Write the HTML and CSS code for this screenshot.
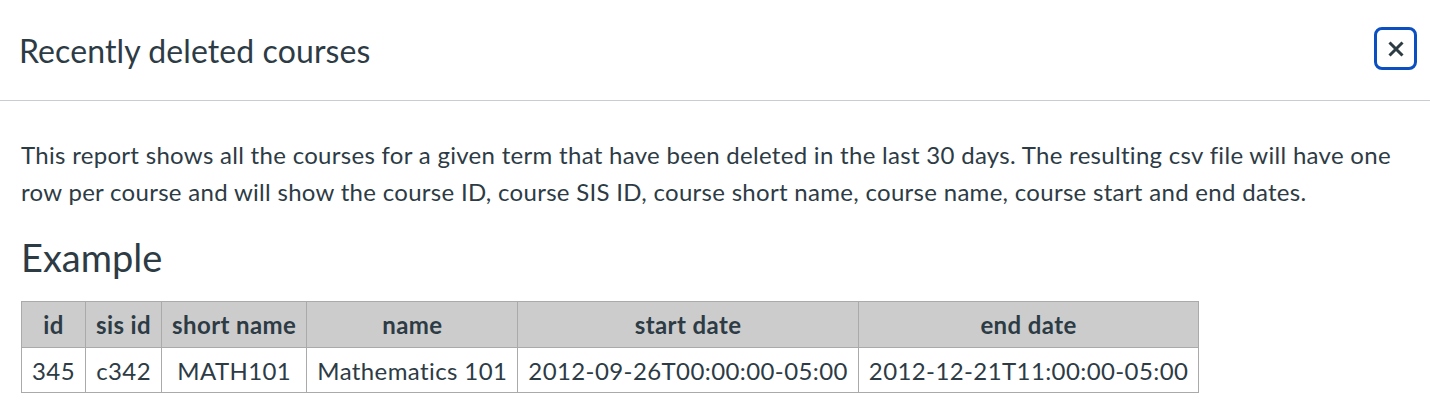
FILE: index.html
```html
<!DOCTYPE html>
<html lang="en">

<head>
    <meta charset="UTF-8">
    <meta name="viewport" content="width=device-width, initial-scale=1.0">
    <title>Recently deleted courses</title>
    <link rel="stylesheet" href="styles.css">
</head>

<body>

    <div class="modal">
        <header class="modal-header">
            <h1>Recently deleted courses</h1>
            <button class="close-btn" type="button" aria-label="Close">
                <svg width="16" height="16" viewBox="0 0 16 16">
                    <path d="M1.5 1.5 L14.5 14.5 M14.5 1.5 L1.5 14.5" stroke="#2d3b45" stroke-width="3" fill="none" />
                </svg>
            </button>
        </header>

        <div class="modal-body">
            <p>This report shows all the courses for a given term that have been deleted in the last 30 days. The resulting csv file will have one row per course and will show the course ID, course SIS ID, course short name, course name, course start and end dates.</p>

            <h2>Example</h2>

            <!-- Sample output of the report -->
            <table>
                <tr>
                    <th>id</th>
                    <th>sis id</th>
                    <th>short name</th>
                    <th>name</th>
                    <th>start date</th>
                    <th>end date</th>
                </tr>
                <tr>
                    <td>345</td>
                    <td>c342</td>
                    <td>MATH101</td>
                    <td>Mathematics 101</td>
                    <td>2012-09-26T00:00:00-05:00</td>
                    <td>2012-12-21T11:00:00-05:00</td>
                </tr>
            </table>
        </div>
    </div>

</body>

</html>
```

FILE: styles.css
```css
body {
    font-family: Lato, "Open Sans", sans-serif;
    margin: 0;
    padding: 0;
    background-color: #ffffff;
    color: #2d3b45;
}

.modal-header {
    display: flex;
    align-items: center;
    justify-content: space-between;
    height: 100px;
    padding: 0 13px 0 19px;
    border-bottom: 1px solid #c7cdd1;
}

h1 {
    font-size: 32px;
    font-weight: 400;
    letter-spacing: 0.1px;
    margin: 0;
}

.close-btn {
    display: flex;
    align-items: center;
    justify-content: center;
    width: 43px;
    height: 43px;
    margin-top: -3px;
    padding: 0;
    background: #ffffff;
    border: 3px solid #0b4fc0;
    /* Focus ring */
    border-radius: 8px;
    cursor: pointer;
}

.modal-body {
    padding: 35px 21px 20px;
}

p {
    font-size: 24px;
    line-height: 37px;
    letter-spacing: 0.3px;
    margin: 0;
}

h2 {
    font-size: 38px;
    font-weight: 400;
    margin: 24px 0 21px;
}

table {
    border-collapse: collapse;
    font-size: 24px;
    letter-spacing: 0.4px;
}

th,
td {
    border: 1px solid #aaaaaa;
    padding: 0 10px;
    text-align: center;
}

th {
    background-color: #cccccc;
    font-weight: 700;
    height: 45px;
}

td {
    height: 44px;
}
```
